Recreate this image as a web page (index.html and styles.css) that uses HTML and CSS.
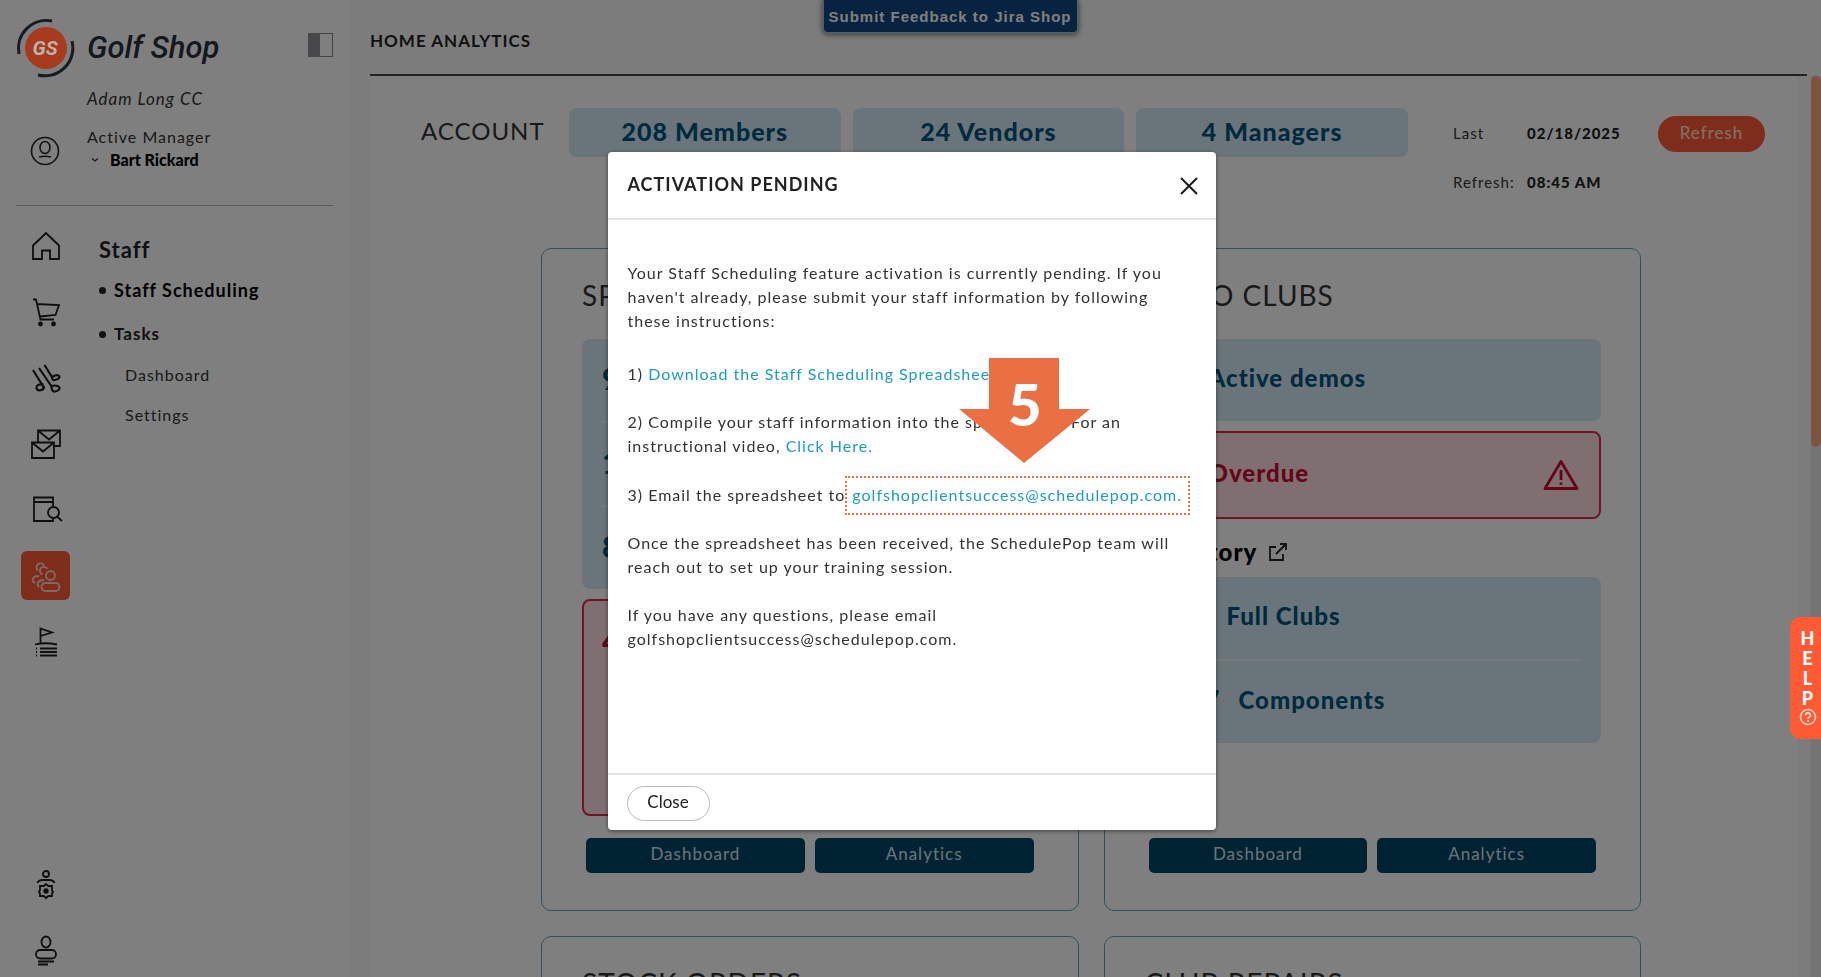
FILE: index.html
```html
<!DOCTYPE html>
<html lang="en">
<head>
<meta charset="utf-8">
<title>Golf Shop - Home Analytics</title>
<link rel="stylesheet" href="styles.css">
</head>
<body>
<div class="app">
  <aside class="sidebar">
    <header class="brand">
      <svg class="brand-mark" viewBox="0 0 60 60" aria-hidden="true">
        <circle cx="30" cy="30" r="21" fill="#a83a1e"/>
        <path d="M3 36A28 28 0 0 1 36 3" fill="none" stroke="#141c24" stroke-width="3"/>
        <path d="M56 23A28 28 0 0 1 22 57" fill="none" stroke="#141c24" stroke-width="3"/>
        <text x="29" y="37" text-anchor="middle" class="brand-initials">GS</text>
      </svg>
      <span class="brand-name">Golf Shop</span>
      <button class="panel-toggle" type="button" aria-label="Collapse sidebar">
        <svg width="25" height="24" viewBox="0 0 25 24"><rect x=".5" y=".5" width="24" height="23" fill="none" stroke="#888"/><rect width="12" height="24" fill="#909094"/></svg>
      </button>
    </header>
    <section class="account-box">
      <svg class="user-icon" width="30" height="30" viewBox="0 0 30 30" fill="none" stroke="#222" stroke-width="1.6"><circle cx="15" cy="15" r="13.5"/><ellipse cx="15" cy="11.500" rx="5" ry="6"/><path d="M9 21q6-1.500 12 0"/></svg>
      <div class="account-text">
        <p class="club">Adam Long CC</p>
        <p class="role">Active Manager</p>
        <button class="manager" type="button"><svg width="8" height="6" viewBox="0 0 8 6" fill="none" stroke="#333" stroke-width="1.300"><path d="M1 1.500l3 2.500 3-2.500"/></svg>Bart Rickard</button>
      </div>
    </section>
    <div class="nav">
      <nav class="rail" aria-label="Sections">
        <a href="#" aria-label="Home"><svg viewBox="0 0 30 30"><path d="M2 28V14.500L15 2l13 12.500V28h-9v-8.500h-8V28z"/></svg></a>
        <a href="#" aria-label="Cart"><svg viewBox="0 0 30 30"><path d="M2 2.500h3L9.500 22.500H23M6 7l22 1-3.500 10L9 19.500"/><circle class="solid" cx="9.500" cy="27" r="1.500"/><circle class="solid" cx="22.500" cy="27" r="1.500"/></svg></a>
        <a href="#" aria-label="Clubs"><svg viewBox="0 0 30 30" class="bold"><path d="M2 7l10.500 17M8 5l13 19M13.500 2l8 13"/><path d="M12.500 21.500q-7-1-7 3.500c1 4 8 2.500 7.500-2M20.500 23q0 6 3.500 5.500 5-1 4.500-4-2-3-8-1.500M21 14q0 4 3 3 4.500-1 4.500-3.500-2-3-7.500.5"/></svg></a>
        <a href="#" aria-label="Messages"><svg viewBox="0 0 30 30"><path d="M1 13.500h22V29H1zM1 13.500l11 9 11-9M7 13.500V1.500h22V17h-6M7 1.500l11 9 11-9"/></svg></a>
        <a href="#" aria-label="Search records"><svg viewBox="0 0 30 30"><path d="M18 26H3V2.500h19V11M3 7h19"/><circle cx="22.500" cy="17.500" r="5.500"/><path d="M26 21.500l5 4.500M18 26h4v-3"/></svg></a>
        <a href="#" class="current" aria-label="Staff"><svg viewBox="0 0 30 30"><circle cx="19.500" cy="14.500" r="4.500"/><rect x="10.500" y="22" width="18" height="8" rx="4"/><path d="M7 9.500a4 4 0 1 1 6-5M11.500 13.500a4 4 0 1 1 5-5.500M4 22c-4-2-3-7 4-7M8 26c-3-3-1-7 5-7"/></svg></a>
        <a href="#" aria-label="Tee sheet"><svg viewBox="0 0 30 30"><path d="M9.500 17V1.500L21 5.500 9.500 9M4 17.500q10-2.500 22 0"/><path d="M9 21.500h17M9 25h17M9 28.500h17M5 21.500h1M5 25h1M5 28.500h1"/></svg></a>
      </nav>
      <div class="menu">
        <h2 class="menu-title">Staff</h2>
        <ul class="menu-list">
          <li><a href="#" class="menu-item selected">Staff Scheduling</a></li>
          <li><a href="#" class="menu-item">Tasks</a>
            <ul class="submenu"><li><a href="#">Dashboard</a></li><li><a href="#">Settings</a></li></ul>
          </li>
        </ul>
      </div>
    </div>
    <nav class="rail rail-bottom" aria-label="Profile">
      <a href="#" aria-label="Staff settings"><svg viewBox="0 0 30 30"><circle cx="15" cy="5" r="3"/><path d="M6.500 14q1-3 5-3h7q4 0 5 3"/><path d="M15 15l2.300 2h3.700v4l1 2-1 1.500v2.500h-3.700L15 29l-2.300-2H9v-2.500L8 23l1-2v-4h3.700z"/><circle class="solid" cx="15" cy="22" r="1.800"/></svg></a>
      <a href="#" aria-label="Profile"><svg viewBox="0 0 30 30"><ellipse cx="15" cy="7" rx="4.500" ry="5.500"/><rect x="5" y="15" width="20" height="8.500" rx="4.200"/><path d="M7 26.500h16M7 29.500h10"/></svg></a>
    </nav>
  </aside>

  <main class="main">
    <header class="topbar"><h1>HOME ANALYTICS</h1></header>
    <div class="content">
      <div class="panel">
        <section class="summary">
          <h2>ACCOUNT</h2>
          <div class="stats"><span>208 Members</span><span>24 Vendors</span><span>4 Managers</span></div>
          <dl class="updated"><dt>Last</dt><dd>02/18/2025</dd><dt>Refresh:</dt><dd>08:45 AM</dd></dl>
          <button class="refresh" type="button">Refresh</button>
        </section>
        <div class="cards">
          <section class="card">
            <h2>SPECIAL ORDERS</h2>
            <div class="tile"><p><b>9</b></p><p><b>1</b></p><p><b>8</b></p></div>
            <div class="tile alert tall"><p><b>4</b></p></div>
            <div class="actions"><button type="button">Dashboard</button><button type="button">Analytics</button></div>
          </section>
          <section class="card">
            <h2>DEMO CLUBS</h2>
            <div class="tile"><p><b>2</b>Active demos</p></div>
            <div class="tile alert"><p><b>1</b>Overdue</p>
              <svg class="warn" width="36" height="32" viewBox="0 0 36 32" fill="none" stroke="#cc0a30" stroke-width="2.800"><path d="M18 2.500L34 29.500H2z" stroke-linejoin="round"/><path d="M18 11v10M18 23.500v2.500"/></svg></div>
            <h3>Inventory <svg width="18" height="18" viewBox="0 0 18 18" fill="none" stroke="#222" stroke-width="1.800"><path d="M7 4H1v13h13v-6M11 1h6v6M17 1L7 11"/></svg></h3>
            <div class="tile"><p><b class="wide">11</b>Full Clubs</p><p><b class="widest">27</b>Components</p></div>
            <div class="actions"><button type="button">Dashboard</button><button type="button">Analytics</button></div>
          </section>
          <section class="card"><h2>STOCK ORDERS</h2></section>
          <section class="card"><h2>CLUB REPAIRS</h2></section>
        </div>
      </div>
      <div class="scrollbar"><div class="thumb"></div></div>
    </div>
  </main>
</div>
<button class="feedback" type="button">Submit Feedback to Jira Shop</button>

<div class="backdrop">
  <div class="modal" role="dialog" aria-modal="true" aria-labelledby="dialog-title">
    <header class="modal-head">
      <h2 id="dialog-title">ACTIVATION PENDING</h2>
      <button class="dismiss" type="button" aria-label="Dismiss"><svg width="18" height="18" viewBox="0 0 18 18" fill="none" stroke="#1a1a1a" stroke-width="2"><path d="M1 1l16 16M17 1L1 17"/></svg></button>
    </header>
    <div class="modal-body">
      <p class="intro">Your Staff Scheduling feature activation is currently pending. If you<br>haven't already, please submit your staff information by following<br>these instructions:</p>
      <p>1) <a href="#">Download the Staff Scheduling Spreadsheet</a></p>
      <p>2) Compile your staff information into the spreadsheet. For an<br>instructional video, <a href="#">Click Here.</a></p>
      <p>3) Email the spreadsheet to <span class="target"><a href="#">golfshopclientsuccess@schedulepop.com.</a><span class="callout"><svg viewBox="0 0 131 105" aria-hidden="true"><path d="M30 0h70v51h31L65 105 0 51h30z" fill="#ea7043"/></svg><strong>5</strong></span></span></p>
      <p>Once the spreadsheet has been received, the SchedulePop team will<br>reach out to set up your training session.</p>
      <p>If you have any questions, please email<br>golfshopclientsuccess@schedulepop.com.</p>
    </div>
    <footer class="modal-foot"><button type="button">Close</button></footer>
  </div>
</div>
<button class="help" type="button" aria-label="Help"><span>H</span><span>E</span><span>L</span><span>P</span><svg width="18" height="18" viewBox="0 0 18 18" fill="none" stroke="#ffd9cf" stroke-width="1.600"><circle cx="9" cy="9" r="7.500"/><path d="M6.500 7.500c0-3.500 5-3.500 5 0 0 1.500-2.500 1.500-2.500 3.500M9 12v2"/></svg></button>
</body>
</html>
```

FILE: styles.css
```css
* { box-sizing: border-box; }
body {
  margin: 0;
  height: 100vh;
  overflow: hidden;
  background: #f8f8f8;
  color: #333;
  font-family: Lato, "Open Sans", sans-serif;
  font-size: 16px;
  line-height: 24px;
  letter-spacing: 1px;
}
h1, h2, h3, p, ul, dl, dd { margin: 0; padding: 0; }
ul { list-style: none; }
a { color: inherit; text-decoration: none; }
button { font: inherit; letter-spacing: inherit; border: 0; padding: 0; background: none; color: inherit; }

.app { display: grid; grid-template-columns: 351px 1fr; height: 100vh; }

/* Sidebar */
.sidebar { display: flex; flex-direction: column; background: #fff; min-height: 0; }
.brand { display: flex; align-items: center; padding: 18px 18px 0 16px; }
.brand-mark { width: 60px; height: 60px; position: relative; z-index: 20; }
.brand-initials { font: italic bold 20px Roboto, sans-serif; letter-spacing: 0; fill: #bcb2ae; }
.brand-name { margin-left: 11px; font: italic 500 31px/40px Roboto, sans-serif; letter-spacing: 0; color: #28323c; }
.panel-toggle { margin-left: auto; height: 24px; margin-bottom: 6px; }
.panel-toggle svg { display: block; }
.account-box { display: flex; gap: 27px; margin: 0 18px 0 16px; padding: 9px 0 34px 14px; border-bottom: 1px solid #bbb; }
.user-icon { margin-top: 49px; }
.club { font-style: italic; font-size: 17px; margin-bottom: 14px; }
.manager { display: flex; align-items: center; gap: 11px; margin-left: 4px; font-weight: 900; letter-spacing: 0; color: #000; line-height: 22px; }

.nav { display: flex; }
.rail { display: flex; flex-direction: column; align-items: center; gap: 17px; width: 49px; margin: 15px 0 0 21px; }
.rail a { display: grid; place-items: center; width: 49px; height: 49px; border-radius: 6px; }
.rail svg { width: 30px; height: 30px; fill: none; stroke: #1c1c1c; stroke-width: 1.8; overflow: visible; }
.rail .bold { stroke-width: 2.2; }
.rail .solid { fill: #1c1c1c; }
.rail .current { background: #ff5a36; }
.rail .current svg { stroke: #ffd6ca; }
.rail-bottom { margin-top: auto; margin-bottom: 3px; }
.menu { margin: 32px 0 0 29px; }
.menu-title { font-size: 22px; line-height: 24px; color: #222; }
.menu-item { display: flex; align-items: center; gap: 8px; height: 24px; margin-top: 16px; font-size: 17px; font-weight: bold; color: #222; }
.menu-item::before { content: ""; width: 7px; height: 7px; border-radius: 50%; background: #222; }
.menu-item.selected { font-size: 18px; font-weight: bold; color: #000; margin-bottom: 20px; }
.submenu { padding: 17px 0 0 26px; display: grid; gap: 16px; }

/* Main column */
.main { display: flex; flex-direction: column; padding-left: 19px; min-width: 0; min-height: 0; }
.topbar { flex: none; height: 76px; margin-right: 14px; padding-top: 29px; border-bottom: 2px solid #444; }
.topbar h1 { font-size: 17px; line-height: 24px; color: #222; }
.content { flex: 1; display: flex; min-height: 0; }
.panel { flex: 1; background: #fff; overflow: hidden; }
.scrollbar { width: 10px; margin-left: 14px; background: #e8e8e8; }
.thumb { height: 38vh; border-radius: 5px; background: #f9a77c; }

.summary { display: flex; align-items: flex-start; padding: 32px 32px 0 51px; }
.summary h2 { width: 148px; font-size: 24px; line-height: 46px; font-weight: normal; }
.stats { flex: 1; display: grid; grid-template-columns: repeat(3, 1fr); gap: 12px; }
.stats span { padding: 11px 0 14px; border-radius: 8px; background: #d4eaf6; color: #00567d; font-size: 25px; font-weight: 900; text-align: center; }
.updated { display: grid; grid-template-columns: 74px 100px; row-gap: 25px; margin: 13px 31px 0 45px; font-size: 15px; white-space: nowrap; }
.updated dd { font-weight: 900; color: #222; }
.refresh { width: 107px; height: 36px; margin-top: 8px; padding-bottom: 2px; border-radius: 18px; background: #ff5a36; color: #ffe5dd; font-size: 17px; }

.cards { display: grid; grid-template-columns: 1fr 1fr; gap: 25px; padding: 54px 156px 0 171px; }
.card { display: flex; flex-direction: column; min-height: 663px; padding: 28px 39px 37px 40px; border: 1px solid #5fa3bc; border-radius: 10px; }
.card h2 { font-size: 28px; line-height: 36px; font-weight: normal; margin-bottom: 26px; }
.card h3 { display: flex; align-items: center; gap: 12px; margin: 19px 0 11px; font-size: 24px; line-height: 28px; font-weight: 900; color: #000; }
.tile { position: relative; border-radius: 8px; background: #d4eaf6; color: #00567d; padding: 0 20px; }
.tile p { display: flex; align-items: center; height: 82px; padding-bottom: 4px; font-size: 24px; font-weight: 900; }
.tile p + p { border-top: 2px solid #f2f2f2; height: 84px; }
.tile b { width: 44px; font-size: 30px; font-weight: 900; }
.tile .wide { width: 62px; }
.tile .widest { width: 74px; padding-right: 18px; text-align: right; }
.alert { display: flex; align-items: center; justify-content: space-between; margin-top: 10px; min-height: 88px; padding: 0 20px 0 18px; border: 2px solid #e2284a; background: #ffdfe2; color: #cc0a30; }
.alert.tall { flex: 1; align-items: flex-start; margin-bottom: 22px; }
.actions { display: grid; grid-template-columns: 1fr 1fr; gap: 10px; margin: auto 5px 0 4px; }
.actions button { height: 35px; padding-bottom: 3px; border-radius: 5px; background: #004668; color: #d8e8f0; font-size: 17px; }

.feedback { position: absolute; top: 0; left: 50%; width: 257px; height: 34px; margin-left: -89px; border: 2px solid #a9bccd; border-top: 0; border-radius: 0 0 6px 6px; background: #10467f; color: #fff; font: bold 15px "Liberation Sans", sans-serif; letter-spacing: 1px; box-shadow: 0 1px 5px #777; white-space: nowrap; }

/* Dialog */
.backdrop { position: fixed; inset: 0; z-index: 10; display: flex; justify-content: center; align-items: flex-start; padding: 152px 0 0 2px; background: rgba(0, 0, 0, .5); }
.modal { width: 608px; border-radius: 4px; background: #fff; box-shadow: 0 1px 4px rgba(0, 0, 0, .5); }
.modal-head { display: flex; justify-content: space-between; align-items: center; height: 68px; padding: 0 18px 2px 20px; border-bottom: 2px solid #e2e2e2; }
.modal-head h2 { font-size: 18px; color: #222; }
.dismiss { height: 18px; margin-top: 3px; }
.dismiss svg { display: block; }
.modal-body { display: grid; align-content: start; gap: 24px; min-height: 553px; padding: 41px 0 20px 20px; white-space: nowrap; }
.modal-body a { color: #1b9cc4; }
.intro { margin-bottom: 5px; }
.target { position: relative; display: inline-block; margin: -6px 0 -8px -5px; padding: 5px 6px 6px 5px; border: 2px dotted #d9734a; line-height: 24px; }
.callout { position: absolute; bottom: 50px; left: 112px; width: 131px; height: 105px; }
.callout svg { display: block; width: 100%; height: 100%; }
.callout strong { position: absolute; inset: 16px 0 auto; text-align: center; color: #fff; font-size: 58px; line-height: 60px; letter-spacing: 0; font-weight: 900; }
.modal-foot { padding: 11px 19px 9px; border-top: 2px solid #e2e2e2; }
.modal-foot button { width: 83px; height: 35px; padding-bottom: 3px; border: 1px solid #bbb; border-radius: 18px; font-size: 17px; letter-spacing: 0; color: #222; }

.help { position: fixed; right: 0; top: 617px; z-index: 20; display: flex; flex-direction: column; align-items: center; width: 31px; padding: 11px 0 13px 4px; border-radius: 10px 0 0 10px; background: #ff5a36; color: #fff; font: 900 18px/20px Lato, sans-serif; letter-spacing: 0; }
```
